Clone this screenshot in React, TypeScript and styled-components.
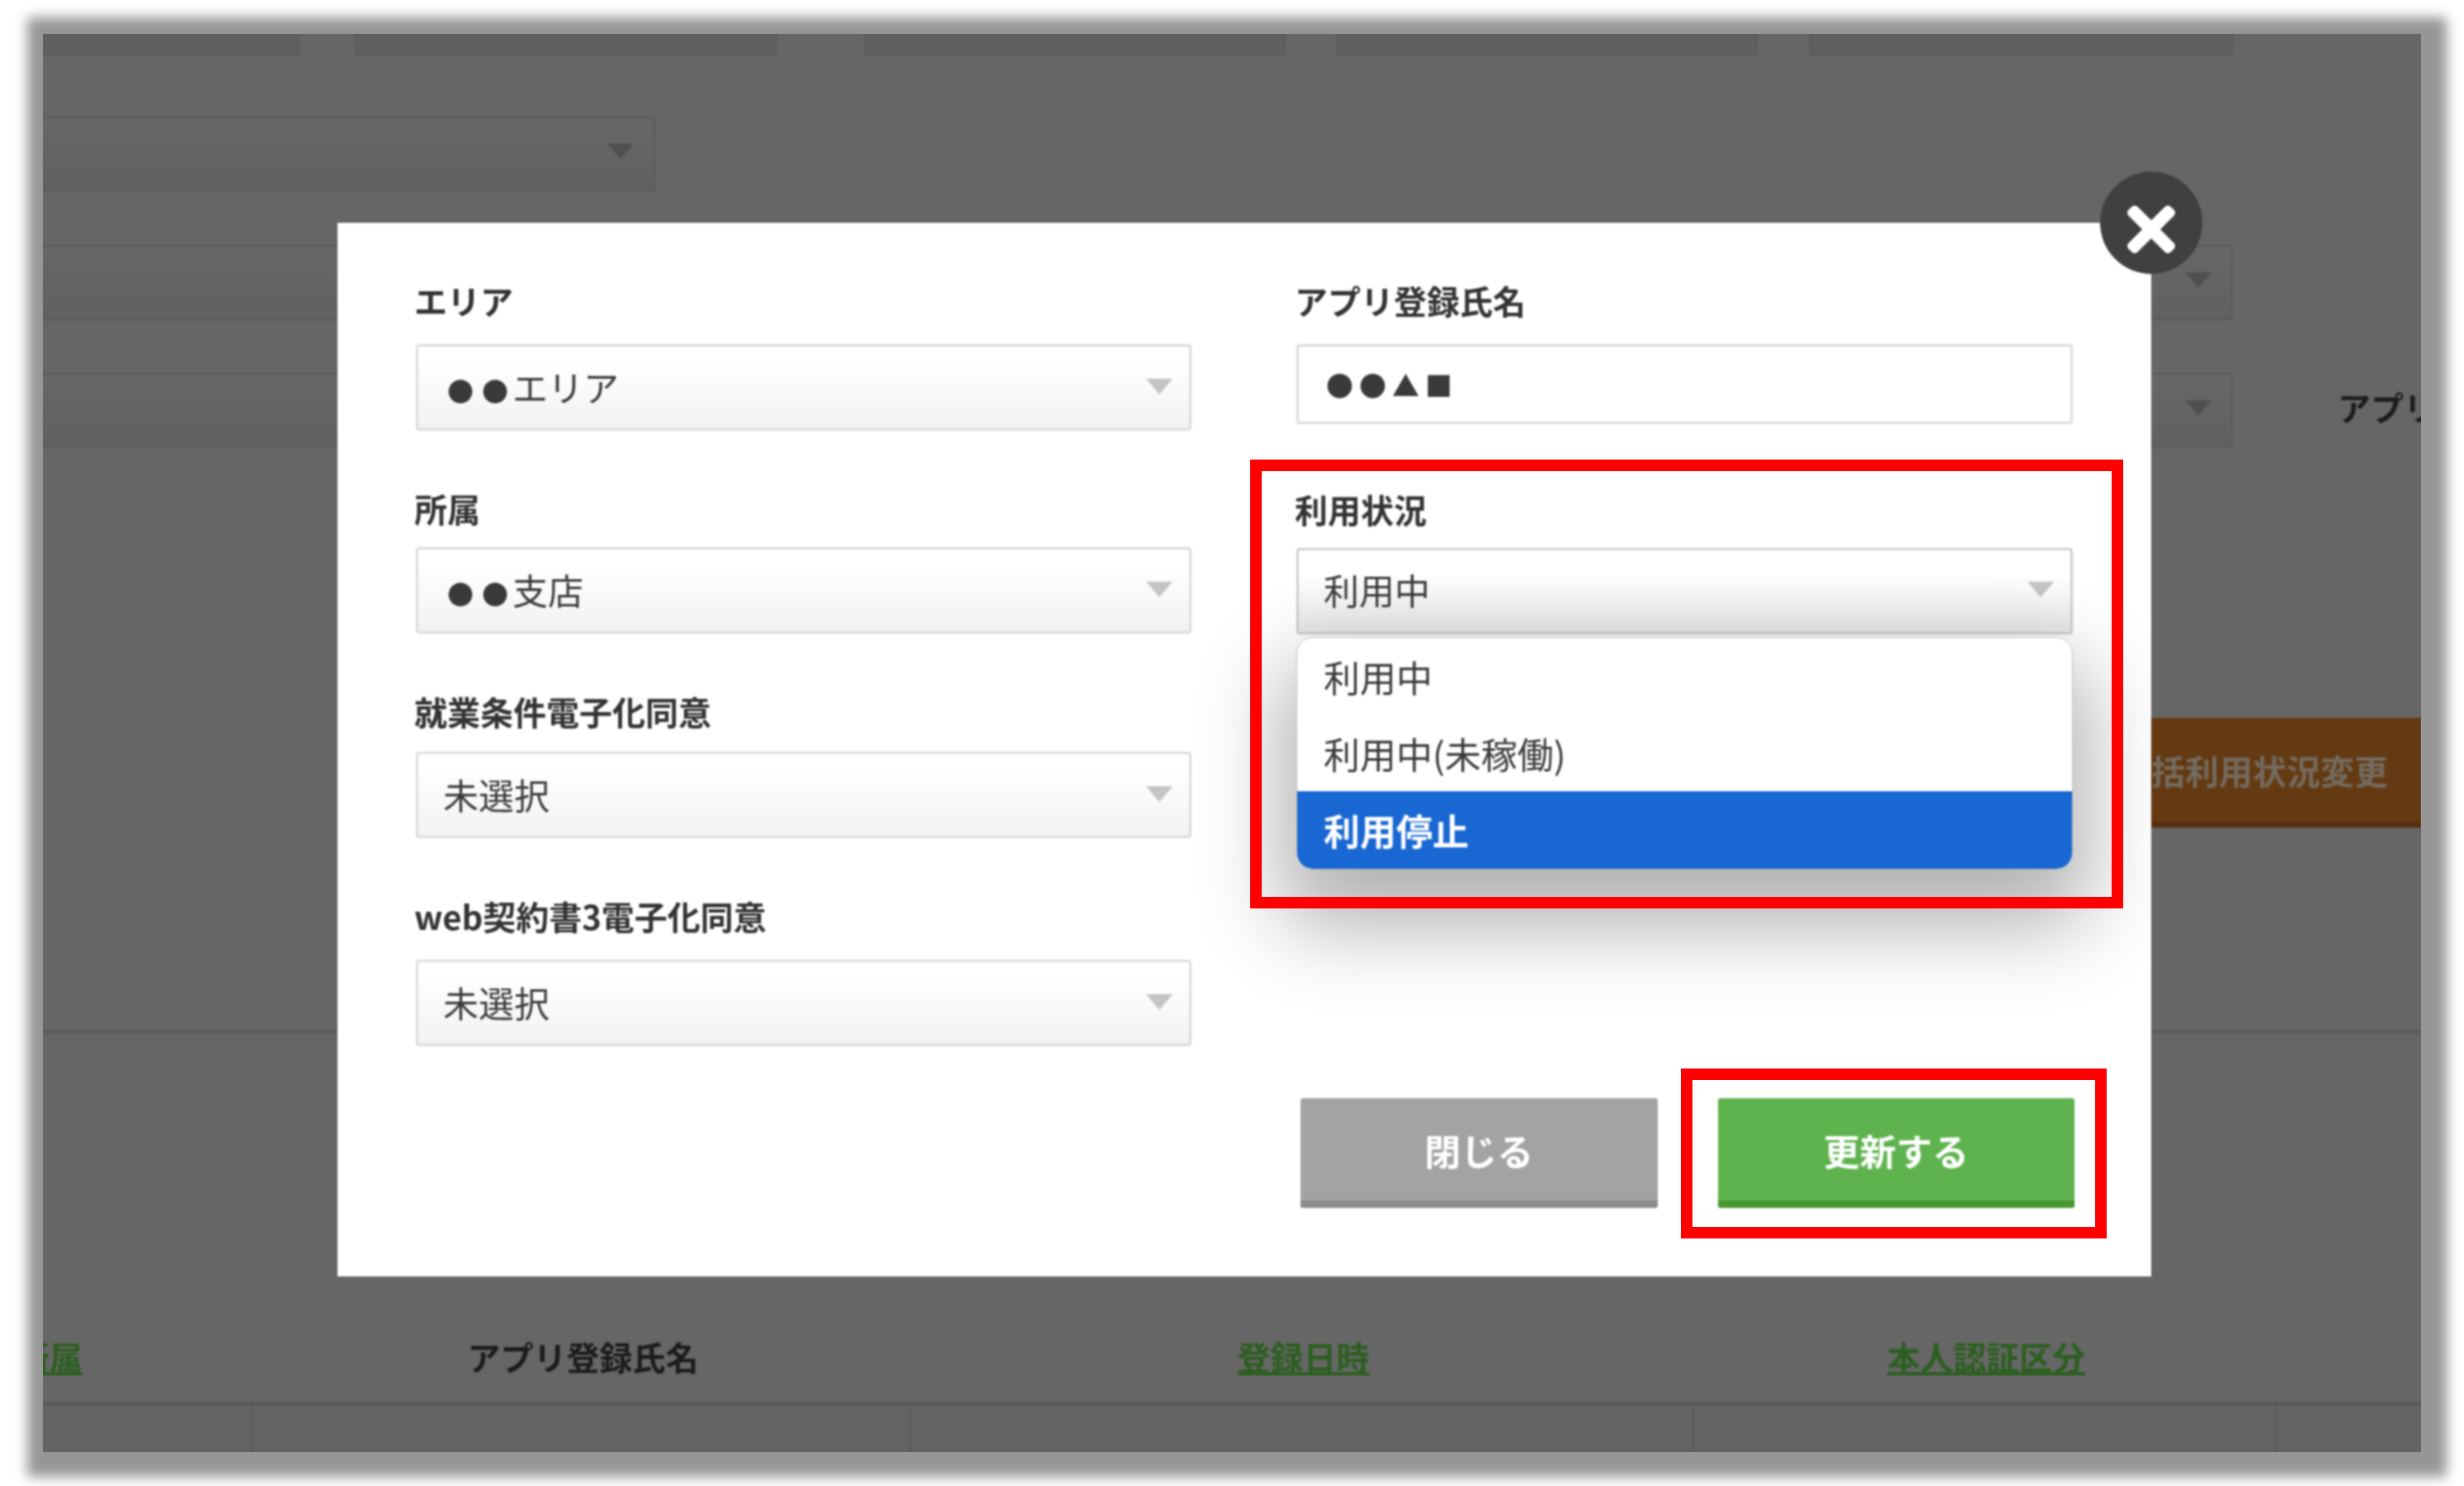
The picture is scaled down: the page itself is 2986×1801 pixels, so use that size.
import type { ReactNode } from "react";
import { createGlobalStyle, styled } from "styled-components";
import { FaTimes } from "react-icons/fa";

const GlobalStyle = createGlobalStyle`
    html, body {
        margin: 0;
        background: #fff;
        width: 2986px;
        height: 1801px;
        overflow: hidden;
    }
    * { box-sizing: border-box; }
    body {
        font-family: "Noto Sans CJK JP", "Noto Sans", sans-serif;
    }
`;

const Frame = styled.div`
    position: relative;
    margin: 41px 0 0 52px;
    width: 2882px;
    height: 1719px;
    background: #666;
    box-shadow: 6px 5px 14px 25px rgba(0, 0, 0, 0.41);
    overflow: hidden;
`;

const Screen = styled.div`
    position: relative;
    height: 100%;
    filter: blur(0.9px);
`;

/* dimmed page behind the modal */
const SearchRow = styled.div`
    display: flex;
    height: 26px;
`;

const ClippedInput = styled.div<{ $width: number; $left: number }>`
    width: ${p => p.$width}px;
    margin-left: ${p => p.$left}px;
    background: #606060;
    border: 2px solid #5a5a5a;
    border-top: 0;
    border-radius: 0 0 4px 4px;
`;

const DimRow = styled.div<{ $top: number }>`
    display: flex;
    align-items: center;
    gap: 127px;
    margin-top: ${p => p.$top}px;
    white-space: nowrap;
`;

const DimSelect = styled.div<{ $width: number }>`
    display: flex;
    justify-content: flex-end;
    align-items: center;
    flex: none;
    width: ${p => p.$width}px;
    height: 91px;
    padding: 0 24px 6px 0;
    background: linear-gradient(#676767, #616161);
    border: 2px solid #5a5a5a;
    border-left: 0;
    border-radius: 0 4px 4px 0;
`;

const Arrow = styled.span<{ $color: string }>`
    flex: none;
    width: 0;
    height: 0;
    border-left: 16px solid transparent;
    border-right: 16px solid transparent;
    border-top: 19px solid ${p => p.$color};
`;

const DimLabel = styled.span`
    font-size: 40px;
    font-weight: 700;
    line-height: 50px;
    color: #1c1c1c;
`;

const RowLabel = styled(DimLabel)`
    margin-top: -10px;
`;

const OrangeButton = styled.div`
    display: flex;
    justify-content: flex-end;
    align-items: center;
    margin: 327px 0 0 auto;
    width: 700px;
    height: 133px;
    padding-right: 40px;
    background: #643a12;
    border-bottom: 7px solid #57300d;
    font-size: 41px;
    font-weight: 700;
    white-space: nowrap;
    color: #736a5e;
`;

const TableHead = styled.div`
    display: grid;
    grid-template-columns: 253px 797px 949px 706px 1fr;
    margin-top: 246px;
    height: 454px;
    border-top: 3px solid #585858;
    border-bottom: 4px solid #585858;
    align-items: end;
    padding-bottom: 30px;
`;

const HeadCell = styled.div<{ $clip?: boolean }>`
    text-align: ${p => (p.$clip ? "right" : "center")};
    padding: 0 ${p => (p.$clip ? 205 : 0)}px 0 ${p => (p.$clip ? 0 : 6)}px;
    white-space: nowrap;
    direction: ${p => (p.$clip ? "rtl" : "ltr")};
`;

const SortLink = styled.a`
    font-size: 40px;
    font-weight: 700;
    line-height: 50px;
    color: #2b5f1f;
    text-decoration: underline;
`;

const TableBody = styled.div`
    display: grid;
    grid-template-columns: 253px 797px 949px 706px 1fr;
    height: 60px;
    background: #636363;
`;

const BodyCell = styled.div<{ $first?: boolean }>`
    border-left: ${p => (p.$first ? "0" : "2px solid #585858")};
`;

/* modal */
const Modal = styled.div`
    position: absolute;
    left: 357px;
    top: 229px;
    width: 2198px;
    height: 1277px;
`;

const ModalBody = styled.div`
    display: grid;
    grid-template-columns: 940px 941px;
    column-gap: 127px;
    height: 100%;
    padding: 71px 0 83px 95px;
    background: #fff;
    overflow: hidden;
`;

const CloseButton = styled.button`
    position: absolute;
    right: -62px;
    top: -62px;
    display: flex;
    align-items: center;
    justify-content: center;
    width: 124px;
    height: 124px;
    padding: 16px 0 0;
    border: 0;
    border-radius: 50%;
    background: #404040;
    color: #fff;
    font-size: 84px;
`;

const Column = styled.div<{ $gap: number }>`
    display: flex;
    flex-direction: column;
    gap: ${p => p.$gap}px;
`;

const Field = styled.div<{ $gap: number }>`
    position: relative;
    display: flex;
    flex-direction: column;
    gap: ${p => p.$gap}px;
`;

const Label = styled.label`
    height: 50px;
    margin-left: -2px;
    font-size: 40px;
    font-weight: 700;
    line-height: 46px;
    color: #333;
`;

const Select = styled.div<{ $open?: boolean }>`
    display: flex;
    align-items: center;
    justify-content: space-between;
    height: 105px;
    padding: 0 20px ${p => (p.$open ? 5 : 3)}px 30px;
    background: linear-gradient(#fff ${p => (p.$open ? "30%" : "20%")}, ${p => (p.$open ? "#e7e7e7" : "#f2f2f2")});
    border: 3px solid ${p => (p.$open ? "#cfcfcf" : "#dcdcdc")};
    border-radius: 4px;
    font-size: 43px;
    color: #3a3a3a;
`;

const TextInput = styled.div`
    display: flex;
    align-items: center;
    height: 97px;
    padding: 0 33px;
    background: #fff;
    border: 3px solid #dcdcdc;
    border-radius: 4px;
    color: #3a3a3a;
`;

/* the placeholder marks are small glyphs on a wide pitch in the original */
const Marks = styled.span<{ $size: number; $track: number; $left: number; $right?: number }>`
    margin: 0 ${p => p.$right ?? 0}px 0 ${p => p.$left}px;
    font-size: ${p => p.$size}px;
    letter-spacing: ${p => p.$track}px;
`;

const Dropdown = styled.ul`
    position: absolute;
    top: calc(100% + 3px);
    left: 0;
    right: 0;
    margin: 0;
    padding: 0;
    list-style: none;
    background: #fff;
    border: 1px solid #bdbdbd;
    border-radius: 20px;
    overflow: hidden;
    z-index: 1;
`;

const DropdownShadow = styled.div`
    position: absolute;
    top: calc(100% + 3px);
    left: 0;
    right: 0;
    height: 282px;
    border-radius: 20px;
    box-shadow: 0 50px 100px 20px rgba(0, 0, 0, 0.3);
`;

const Option = styled.li<{ $active?: boolean; $height: number }>`
    display: flex;
    align-items: center;
    height: ${p => p.$height}px;
    padding-left: 32px;
    font-size: 44px;
    font-weight: ${p => (p.$active ? 700 : 400)};
    color: ${p => (p.$active ? "#fff" : "#3a3a3a")};
    background: ${p => (p.$active ? "#1967d2" : "transparent")};
`;

const Footer = styled.div`
    display: flex;
    gap: 73px;
    width: 943px;
    margin-top: auto;
    padding-left: 5px;
`;

const ActionButton = styled.button<{ $bg: string; $edge: string }>`
    width: 433px;
    height: 133px;
    padding: 2px 0 0;
    border: 0;
    border-bottom: 9px solid ${p => p.$edge};
    border-radius: 3px;
    background: ${p => p.$bg};
    font-family: inherit;
    font-size: 44px;
    font-weight: 700;
    color: #fff;
`;

const Callout = styled.div<{ $x: number; $y: number; $w: number; $h: number }>`
    position: absolute;
    left: ${p => p.$x}px;
    top: ${p => p.$y}px;
    width: ${p => p.$w}px;
    height: ${p => p.$h}px;
    border: 14px solid #f00;
    z-index: 5;
`;

function FormSelect({ label, children, gap }: { label: string; children: ReactNode; gap: number }) {
    return <Field $gap={gap}>
        <Label>{label}</Label>
        <Select>
            <span>{children}</span>
            <Arrow $color="#c4c4c4" />
        </Select>
    </Field>;
}

const dots = <Marks $size={32} $track={10} $left={5} $right={-5}>●●</Marks>;

export default function App() {
    return <>
        <GlobalStyle />
        <Frame>
            <Screen>
                <SearchRow>
                    <ClippedInput $width={315} $left={-4} />
                    <ClippedInput $width={511} $left={67} />
                    <ClippedInput $width={511} $left={106} />
                    <ClippedInput $width={510} $left={62} />
                    <ClippedInput $width={513} $left={63} />
                </SearchRow>
                <DimRow $top={74}>
                    <DimSelect $width={742}><Arrow $color="#505050" /></DimSelect>
                </DimRow>
                <DimRow $top={65}>
                    <DimSelect $width={2654}><Arrow $color="#505050" /></DimSelect>
                </DimRow>
                <DimRow $top={64}>
                    <DimSelect $width={2654}><Arrow $color="#505050" /></DimSelect>
                    <RowLabel>アプリ登録氏名</RowLabel>
                </DimRow>
                <OrangeButton>一括利用状況変更</OrangeButton>
                <TableHead>
                    <HeadCell $clip><SortLink>所属</SortLink></HeadCell>
                    <HeadCell><DimLabel>アプリ登録氏名</DimLabel></HeadCell>
                    <HeadCell><SortLink>登録日時</SortLink></HeadCell>
                    <HeadCell><SortLink>本人認証区分</SortLink></HeadCell>
                    <HeadCell />
                </TableHead>
                <TableBody>
                    <BodyCell $first />
                    <BodyCell />
                    <BodyCell />
                    <BodyCell />
                    <BodyCell />
                </TableBody>

                <Modal>
                    <ModalBody>
                        <Column $gap={71}>
                            <FormSelect label="エリア" gap={26}>{dots}エリア</FormSelect>
                            <FormSelect label="所属" gap={20}>{dots}支店</FormSelect>
                            <FormSelect label="就業条件電子化同意" gap={22}>未選択</FormSelect>
                            <FormSelect label="web契約書3電子化同意" gap={26}>未選択</FormSelect>
                        </Column>
                        <Column $gap={80}>
                            <Field $gap={26}>
                                <Label>アプリ登録氏名</Label>
                                <TextInput><Marks $size={33} $track={7} $left={0}>●●▲■</Marks></TextInput>
                            </Field>
                            <Field $gap={20}>
                                <Label>利用状況</Label>
                                <Select $open>
                                    利用中
                                    <Arrow $color="#c4c4c4" />
                                </Select>
                                <DropdownShadow />
                                <Dropdown>
                                    <Option $height={93}>利用中</Option>
                                    <Option $height={93}>利用中(未稼働)</Option>
                                    <Option $height={94} $active>利用停止</Option>
                                </Dropdown>
                            </Field>
                            <Footer>
                                <ActionButton $bg="#a3a3a3" $edge="#8b8b8b">閉じる</ActionButton>
                                <ActionButton $bg="#5fb34e" $edge="#479632">更新する</ActionButton>
                            </Footer>
                        </Column>
                    </ModalBody>
                    <CloseButton><FaTimes /></CloseButton>
                </Modal>
            </Screen>
            <Callout $x={1463} $y={516} $w={1058} $h={544} />
            <Callout $x={1985} $y={1254} $w={516} $h={206} />
        </Frame>
    </>;
}
